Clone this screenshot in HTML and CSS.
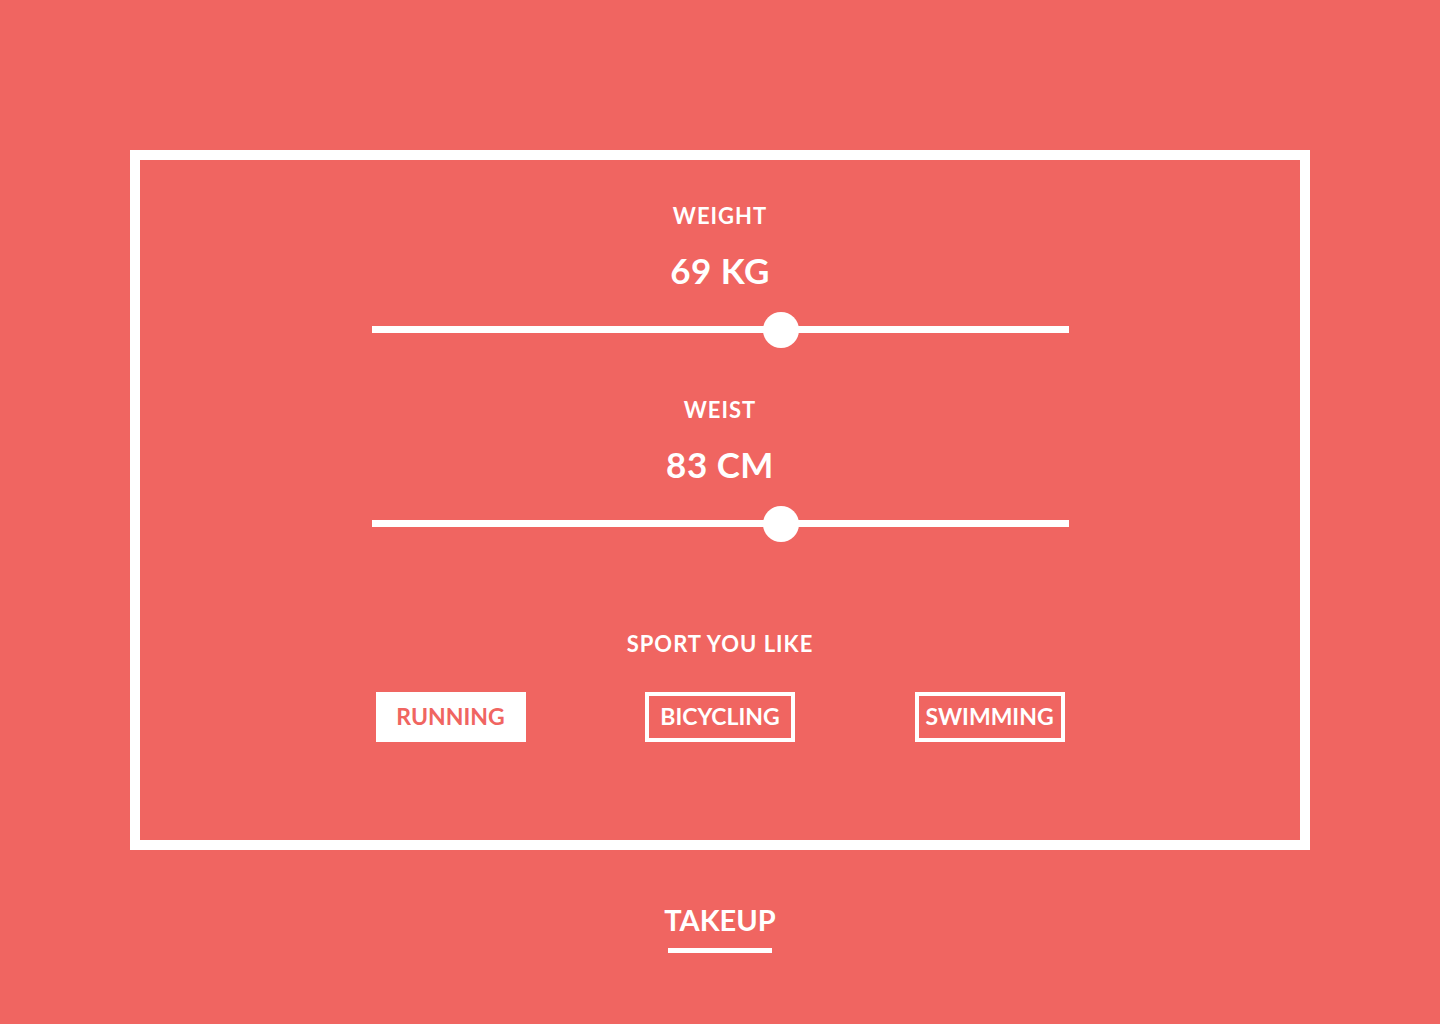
FILE: index.html
```html
<!DOCTYPE html>
<html>
<head>
<meta charset="utf-8">
<link rel="stylesheet" href="styles.css">
</head>
<body>
<div class="page">
  <div class="frame">
    <div class="label l-first">WEIGHT</div>
    <div class="value">69 KG</div>
    <div class="slider"><div class="track"></div><div class="thumb" style="left: 58.7%"></div></div>
    <div class="label l-second">WEIST</div>
    <div class="value">83 CM</div>
    <div class="slider"><div class="track"></div><div class="thumb" style="left: 58.7%"></div></div>
    <div class="label l-sport">SPORT YOU LIKE</div>
    <div class="sports">
      <div class="btn active">RUNNING</div>
      <div class="btn">BICYCLING</div>
      <div class="btn">SWIMMING</div>
    </div>
  </div>
  <div class="takeup">TAKEUP</div>
  <div class="underline"></div>
</div>
</body>
</html>
```
FILE: styles.css
```css
html, body {
  margin: 0;
  padding: 0;
  background: #f06561;
}
body {
  font-family: Lato, "Noto Sans", sans-serif;
  font-weight: 700;
  color: #fff;
  height: 1024px;
  overflow: hidden;
}
.page {
  display: flex;
  flex-direction: column;
  align-items: center;
  padding-top: 150px;
}
.frame {
  box-sizing: border-box;
  width: 1180px;
  height: 700px;
  border: 10px solid #fff;
  display: flex;
  flex-direction: column;
  align-items: center;
  padding-top: 45px;
}
.label {
  font-size: 22px;
  line-height: 22px;
  letter-spacing: 1px;
}
.value {
  font-size: 35px;
  line-height: 35px;
  margin-top: 26px;
  letter-spacing: 0.5px;
}
.l-second {
  margin-top: 51px;
}
.slider {
  position: relative;
  width: 697px;
  height: 36px;
  margin-top: 24px;
}
.track {
  position: absolute;
  left: 0;
  right: 0;
  top: 14px;
  height: 7px;
  background: #fff;
}
.thumb {
  position: absolute;
  top: 0;
  width: 36px;
  height: 36px;
  margin-left: -18px;
  border-radius: 50%;
  background: #fff;
}
.l-sport {
  margin-top: 91px;
}
.sports {
  width: 689px;
  display: flex;
  justify-content: space-between;
  margin-top: 37px;
}
.btn {
  box-sizing: border-box;
  width: 150px;
  height: 50px;
  border: 4px solid #fff;
  display: flex;
  align-items: center;
  justify-content: center;
  font-size: 23px;
  padding-bottom: 3px;
}
.btn.active {
  background: #fff;
  color: #f06561;
}
.takeup {
  font-size: 29px;
  line-height: 29px;
  margin-top: 55px;
}
.underline {
  width: 104px;
  height: 5px;
  background: #fff;
  margin-top: 14px;
}
```
